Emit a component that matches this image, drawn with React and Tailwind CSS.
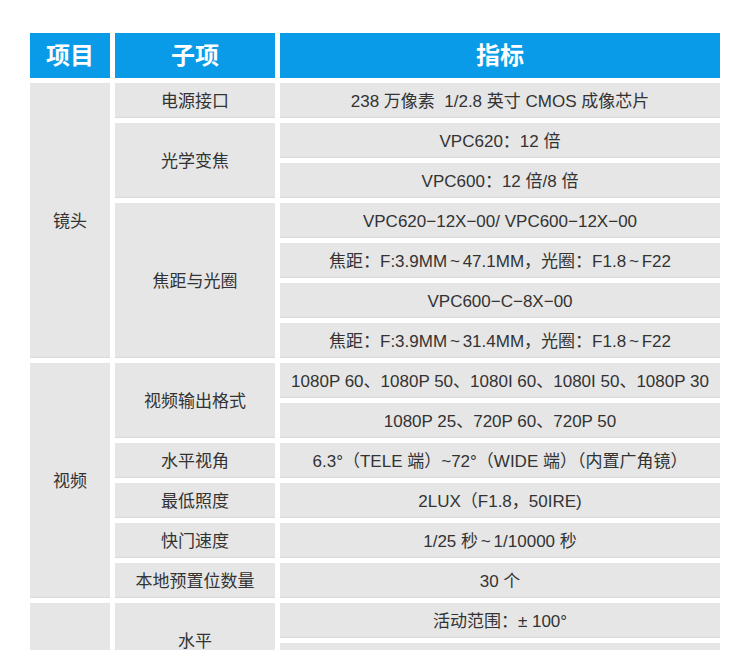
import React from 'react';

const T = '\u2006~\u2006';

const sections = [
  {
    name: '镜头',
    items: [
      { sub: '电源接口', specs: ['238 万像素  1/2.8 英寸 CMOS 成像芯片'] },
      { sub: '光学变焦', specs: ['VPC620：12 倍', 'VPC600：12 倍/8 倍'] },
      {
        sub: '焦距与光圈',
        specs: [
          'VPC620−12X−00/ VPC600−12X−00',
          `焦距：F:3.9MM${T}47.1MM，光圈：F1.8${T}F22`,
          'VPC600−C−8X−00',
          `焦距：F:3.9MM${T}31.4MM，光圈：F1.8${T}F22`,
        ],
      },
    ],
  },
  {
    name: '视频',
    items: [
      {
        sub: '视频输出格式',
        specs: ['1080P 60、1080P 50、1080I 60、1080I 50、1080P 30', '1080P 25、720P 60、720P 50'],
      },
      { sub: '水平视角', specs: ['6.3°（TELE 端）~72°（WIDE 端）（内置广角镜）'] },
      { sub: '最低照度', specs: ['2LUX（F1.8，50IRE)'] },
      { sub: '快门速度', specs: [`1/25 秒${T}1/10000 秒`] },
      { sub: '本地预置位数量', specs: ['30 个'] },
    ],
  },
  {
    name: '云台',
    items: [
      { sub: '水平', specs: ['活动范围：± 100°', `速度：0.1°${T}100°/秒`] },
      { sub: '垂直', specs: ['活动范围：± 30°', `速度：0.1°${T}45°/秒`] },
      { sub: '预置位速度', specs: ['水平：100°/秒，垂直：45°/秒'] },
    ],
  },
];

const cell = 'flex items-center justify-center pt-[3px] bg-[#e6e6e6] border-b border-[#dadada]';
const head = 'flex items-center justify-center bg-[#0a9be8] text-white text-[24px] font-bold';

export default function App() {
  return (
    <div className="bg-white min-h-[650px] pt-[33px] px-[30px] font-['Liberation_Sans','Noto_Sans_CJK_SC',sans-serif] text-[17px] text-[#333]">
      <div className="grid grid-cols-[80px_160px_440px] grid-rows-[45px] auto-rows-[35px] gap-[5px]">
        <div className={head}>项目</div>
        <div className={head}>子项</div>
        <div className={head}>指标</div>
        {sections.map(section => {
          const total = section.items.reduce((n, it) => n + it.specs.length, 0);
          return (
            <React.Fragment key={section.name}>
              <div className={cell} style={{ gridRow: `span ${total}` }}>
                {section.name}
              </div>
              {section.items.map(item => (
                <React.Fragment key={item.sub}>
                  <div
                    className={`${cell} col-start-2`}
                    style={{ gridRow: `span ${item.specs.length}` }}
                  >
                    {item.sub}
                  </div>
                  {item.specs.map((spec, i) => (
                    <div
                      key={i}
                      className={`${cell} col-start-3 whitespace-pre`}
                    >
                      {spec}
                    </div>
                  ))}
                </React.Fragment>
              ))}
            </React.Fragment>
          );
        })}
      </div>
    </div>
  );
}
